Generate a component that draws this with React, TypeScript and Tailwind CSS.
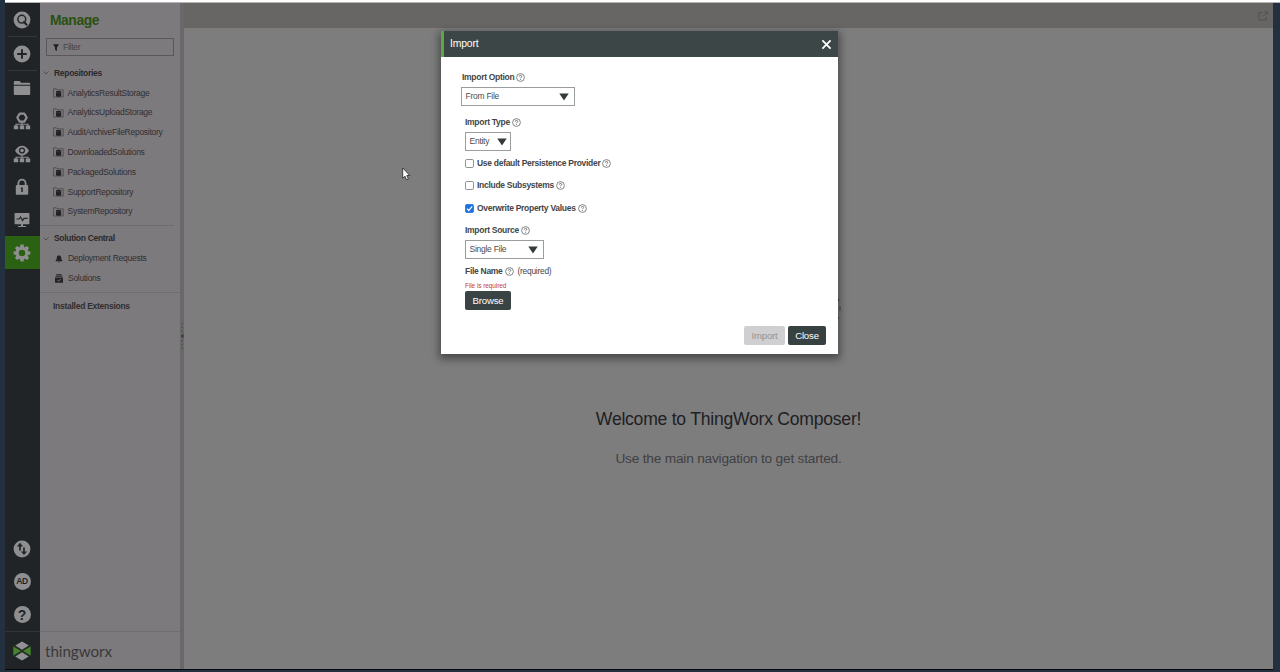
import React from "react";

const light = "#8f8f91";
const dark = "#202527";

function Search() {
  return (
    <svg width="18" height="18" viewBox="0 0 18 18">
      <circle cx="9" cy="9" r="8.4" fill={light} />
      <circle cx="8.8" cy="8.2" r="3.9" fill="none" stroke={dark} strokeWidth="1.5" />
      <path d="M11 11l2.6 2.8" stroke={dark} strokeWidth="2" strokeLinecap="round" />
    </svg>
  );
}
function Plus() {
  return (
    <svg width="18" height="18" viewBox="0 0 18 18">
      <circle cx="9" cy="9" r="8.4" fill={light} />
      <path d="M9 4.2v9.6M4.2 9h9.6" stroke={dark} strokeWidth="1.9" />
    </svg>
  );
}
function Folder() {
  return (
    <svg width="18" height="18" viewBox="0 0 18 18">
      <path d="M.8 4.8V3q0-1 1-1h4.4q.9 0 1.2.8l.5 1h8.3q1 0 1 1v.9H.8zM.8 6.8h16.4v8.3q0 1-1 1H1.8q-1 0-1-1z" fill={light} />
    </svg>
  );
}
function Things({ eye }: { eye?: boolean }) {
  return (
    <svg width="18" height="18" viewBox="0 0 18 18">
      {eye ? (
        <>
          <path d="M2 5.7Q5 .8 9 .8t7 4.9Q13 10.4 9 10.4T2 5.7z" fill={light} />
          <circle cx="9" cy="5.5" r="3.1" fill={dark} />
          <circle cx="9" cy="5.5" r="1.8" fill={light} />
        </>
      ) : (
        <path d="M6.7 1.6h4.6l2.4 4-2.4 4H6.7l-2.4-4z" fill="none" stroke={light} strokeWidth="2.1" strokeLinejoin="round" />
      )}
      <path d="M9 10v4M3 14v-1.8h12V14" fill="none" stroke={light} strokeWidth="1.1" />
      <path d="M.8 13.5h4.4v3.7H.8zM6.8 13.5h4.4v3.7H6.8zM12.8 13.5h4.4v3.7h-4.4z" fill={light} />
    </svg>
  );
}
function Lock() {
  return (
    <svg width="18" height="18" viewBox="0 0 18 18">
      <path d="M5.4 8V5.2a3.6 3.6 0 017.2 0V8" fill="none" stroke={light} strokeWidth="1.8" />
      <rect x="2.8" y="7" width="12.4" height="9.8" rx="1" fill={light} />
      <path d="M8 9.6h1.8v4.4H8.3v-3H7.6z" fill={dark} />
    </svg>
  );
}
function Monitor() {
  return (
    <svg width="18" height="18" viewBox="0 0 18 18">
      <rect x="1.6" y="2" width="14.8" height="11.2" rx=".6" fill={light} />
      <path d="M3.4 8h2.8l1.4-2 2 3.6 1.3-2.2h3.7" fill="none" stroke={dark} strokeWidth="1.1" />
      <path d="M8 13h2v2h3v1.1H5V15h3z" fill={light} />
    </svg>
  );
}
const teeth = [0, 45, 90, 135, 180, 225, 270, 315];
function Gear() {
  return (
    <svg width="18" height="18" viewBox="0 0 18 18">
      {teeth.map((a) => (
        <path key={a} d="M6.9 3.6L7.5.6h3l.6 3z" fill={light} transform={`rotate(${a} 9 9)`} />
      ))}
      <circle cx="9" cy="9" r="4.8" fill="none" stroke={light} strokeWidth="3" />
    </svg>
  );
}
function Transfer() {
  return (
    <svg width="18" height="18" viewBox="0 0 18 18">
      <circle cx="9" cy="9" r="8.4" fill={light} />
      <path d="M7 10.4V5.2M11 7.6v5" stroke={dark} strokeWidth="1.7" />
      <path d="M3.9 6.4L7 2.8l3.1 3.6zM7.9 11.5L11 15.1l3.1-3.6z" fill={dark} />
    </svg>
  );
}
function Badge({ children, big }: { children: string; big?: boolean }) {
  return (
    <div
      className={`flex h-[17px] w-[17px] items-center justify-center rounded-full bg-[#8f8f91] leading-none font-bold text-[#202527] ${big ? "text-[14px]" : "text-[8.5px] tracking-[-0.4px]"}`}
    >
      {children}
    </div>
  );
}
function Logo() {
  return (
    <svg width="20" height="20" viewBox="0 0 20 20">
      <path d="M10 .6l6.8 3.9L10 8.8 3.2 4.5zM10 11.2l6.8 4.3L10 19.4l-6.8-3.9z" fill="#929294" />
      <path d="M1.3 5.2L9.1 10l-7.8 4.8zM18.7 5.2L10.9 10l7.8 4.8z" fill="#47832e" />
      <path d="M1.3 5.2L18.7 14.8M18.7 5.2L1.3 14.8" stroke="#28401f" strokeWidth=".7" />
    </svg>
  );
}
function Help() {
  return (
    <svg width="9" height="9" viewBox="0 0 9 9" className="shrink-0">
      <circle cx="4.5" cy="4.5" r="3.9" fill="none" stroke="#5d6060" strokeWidth=".75" />
      <path d="M3.3 3.6q0-1.2 1.2-1.2t1.2 1.1c0 .8-1.2.8-1.2 1.8M4.5 6v.8" fill="none" stroke="#4b4e4e" strokeWidth=".75" />
    </svg>
  );
}
function RepoIcon() {
  return (
    <svg width="11" height="10" viewBox="0 0 11 10" className="shrink-0">
      <path d="M.6 9V.8h2.8l.8 1h6v7.2z" fill="#7d7a7d" stroke="#3f3d40" strokeWidth=".65" />
      <path d="M3 3.2q2.6-1.1 5.2 0v5q-2.6 1.1-5.2 0z" fill="#222023" />
      <path d="M3 4.4q2.6.8 5.2 0" stroke="#5b585a" strokeWidth=".35" fill="none" />
    </svg>
  );
}
function Chevron() {
  return (
    <svg width="6" height="4" viewBox="0 0 6 4" className="shrink-0">
      <path d="M.5.5L3 3 5.5.5" fill="none" stroke="#454345" strokeWidth=".8" />
    </svg>
  );
}
function SectionTitle({ children }: { children: string }) {
  return (
    <div className="flex h-5 items-center gap-[5px] pl-[3px] text-[8.5px] tracking-[-0.3px] font-bold text-[#2a282b]">
      <Chevron />
      {children}
    </div>
  );
}
function Select({ children, className }: { children: string; className: string }) {
  return (
    <div className={`flex h-[19px] items-center justify-between border border-[#9b9d9d] pl-[3.5px] text-[8.5px] tracking-[-0.26px] text-[#4a4d4d] ${className}`}>
      {children}
      <svg width="10" height="8" viewBox="0 0 10 8">
        <path d="M.3.6h9.4L5 7.6z" fill="#333b3b" />
      </svg>
    </div>
  );
}
function Label({ children, className = "" }: { children: string; className?: string }) {
  return (
    <div className={`flex h-[10px] items-center gap-[2px] text-[8.5px] tracking-[-0.29px] leading-none font-bold whitespace-nowrap text-[#434647] ${className}`}>
      <span>{children}</span>
      <Help />
    </div>
  );
}
function Check({ label, checked, className }: { label: string; checked?: boolean; className: string }) {
  return (
    <div className={`flex items-center gap-[3px] ${className}`}>
      <svg width="9" height="9" viewBox="0 0 9 9">
        <rect x=".5" y=".5" width="8" height="8" rx="1.3" fill={checked ? "#1a73e0" : "#fff"} stroke={checked ? "#1a73e0" : "#777"} strokeWidth=".8" />
        {checked && <path d="M2 4.7l1.8 1.8L7.2 2.4" fill="none" stroke="#fff" strokeWidth="1.2" />}
      </svg>
      <Label>{label}</Label>
    </div>
  );
}

const repositories = [
  "AnalyticsResultStorage",
  "AnalyticsUploadStorage",
  "AuditArchiveFileRepository",
  "DownloadedSolutions",
  "PackagedSolutions",
  "SupportRepository",
  "SystemRepository",
];

function RailItem({ children, active }: { children: React.ReactNode; active?: boolean }) {
  return <div className={`flex h-[33px] shrink-0 items-center justify-center pr-px ${active ? "bg-[#2b6112]" : ""}`}>{children}</div>;
}

function Rail() {
  return (
    <nav className="flex w-[35px] shrink-0 flex-col bg-[#202427]">
      <div className="mx-[3px] flex h-[34px] items-center justify-center border-b border-[#34383a] pr-px"><Search /></div>
      <div className="mx-[3px] flex h-[34px] items-center justify-center border-b border-[#34383a] pr-px"><Plus /></div>
      <RailItem><Folder /></RailItem>
      <RailItem><Things /></RailItem>
      <RailItem><Things eye /></RailItem>
      <RailItem><Lock /></RailItem>
      <RailItem><Monitor /></RailItem>
      <RailItem active><Gear /></RailItem>
      <div className="mt-auto" />
      <RailItem><Transfer /></RailItem>
      <RailItem><Badge>AD</Badge></RailItem>
      <RailItem><Badge big>?</Badge></RailItem>
      <div className="flex h-[38px] items-center justify-center border-t border-[#303436] pr-[2px]"><Logo /></div>
    </nav>
  );
}

function Sidebar() {
  return (
    <aside className="flex w-[140px] shrink-0 flex-col bg-[#7d7a7d] text-[8.5px] tracking-[-0.27px] text-[#302e31]">
      <h1 className="mt-[10px] ml-[10px] text-[13.8px] leading-4 font-bold tracking-[-0.4px] text-[#29510f]">Manage</h1>
      <div className="mt-[9px] ml-[6px] flex h-[18px] w-[128px] items-center gap-[4px] border border-[#59575a] pl-[6px] text-[#444245]">
        <svg width="6" height="7" viewBox="0 0 6 7"><path d="M0 .2h6L3.9 3.4V7L2.1 6V3.4z" fill="#222023" /></svg>
        Filter
      </div>
      <div className="mt-[7px]"><SectionTitle>Repositories</SectionTitle></div>
      <ul>
        {repositories.map((r) => (
          <li key={r} className="flex h-[19.8px] items-center gap-[3.5px] pl-[13px]">
            <RepoIcon />{r}
          </li>
        ))}
      </ul>
      <div className="mt-[3px] mr-[6px] border-t border-[#706d70] pt-[3px]">
        <SectionTitle>Solution Central</SectionTitle>
      </div>
      <div className="flex h-5 items-center gap-[5px] pl-[15px]">
        <svg width="8" height="8" viewBox="0 0 8 8"><path d="M4 .2q2.3.3 2.3 2.8 0 2 1.4 3.2H.3Q1.7 5 1.7 3 1.7.5 4 .2zM3 6.8h2q-1 1.4-2 0z" fill="#252326" /></svg>
        Deployment Requests
      </div>
      <div className="flex h-5 items-center gap-[5px] pl-[15px]">
        <svg width="8" height="9" viewBox="0 0 8 9"><path d="M1.2.3h5.6v1H1.2zM.6 1.8h6.8v1H.6zM0 3.4h8v5.3H0z" fill="#252326" /><path d="M2.5 6l1.2 1.2 2-2.3" fill="none" stroke="#858285" strokeWidth=".8" /></svg>
        Solutions
      </div>
      <div className="mt-[3px] border-t border-[#706d70] pt-[7px] pl-[13px] leading-[12px] font-bold">Installed Extensions</div>
      <div className="mt-auto flex h-[38px] items-center border-t border-[#706d70] pt-px pl-[5px] font-[Lato] text-[15.2px] tracking-[-0.05px] text-[#3a383a]">thingworx</div>
    </aside>
  );
}

function ImportDialog() {
  return (
    <section className="absolute top-[31px] left-[441px] flex h-[323px] w-[396.5px] flex-col bg-white shadow-[0_3px_8px_2px_rgba(0,0,0,0.42)]">
      <header className="flex h-[26px] shrink-0 items-center justify-between border-l-[3px] border-[#5fa744] bg-[#3c4646] pr-[6px] pl-[6px] text-[10.4px] tracking-[-0.15px] text-white">
        <span className="mb-px">Import</span>
        <svg width="11" height="11" viewBox="0 0 11 11"><path d="M1.4 1.4l8.2 8.2M9.6 1.4L1.4 9.6" stroke="#fff" strokeWidth="1.8" /></svg>
      </header>
      <div className="pl-[20px]">
        <Label className="mt-[15px] ml-[1px]">Import Option</Label>
        <Select className="mt-[5px] w-[114px] pr-[5px]">From File</Select>
        <div className="flex flex-col items-start pl-[4px]">
          <Label className="mt-[11px]">Import Type</Label>
          <Select className="mt-[5px] w-[46px] pr-[3px]">Entity</Select>
          <Check className="mt-[7px]" label="Use default Persistence Provider" />
          <Check className="mt-[12px]" label="Include Subsystems" />
          <Check className="mt-[13px]" label="Overwrite Property Values" checked />
          <Label className="mt-[12px]">Import Source</Label>
          <Select className="mt-[5px] w-[79px] pr-[5px]">Single File</Select>
          <div className="mt-[7px] flex items-center gap-[4px] text-[8.4px] leading-none tracking-[-0.25px] text-[#434647]">
            <Label>File Name</Label>(required)
          </div>
          <div className="mt-[6px] text-[6.5px] leading-[8px] tracking-[-0.08px] text-[#c33d3d]">File is required</div>
          <button className="mt-px h-[19px] w-[46px] rounded-[2px] bg-[#3a4444] pt-px text-[9.6px] leading-none tracking-[-0.18px] text-white">Browse</button>
        </div>
      </div>
      <footer className="mt-auto mr-[11.5px] mb-[9px] flex justify-end gap-[3px] text-[9.6px] leading-none tracking-[-0.18px]">
        <button className="h-[19px] w-[41px] rounded-[2px] bg-[#cfcfd1] pt-px text-[#939496]">Import</button>
        <button className="h-[19px] w-[38px] rounded-[2px] bg-[#374141] pt-px text-white">Close</button>
      </footer>
    </section>
  );
}

export default function App() {
  return (
    <div className="relative flex h-[672px] w-[1280px] flex-col overflow-hidden bg-[#223040] font-['Liberation_Sans',sans-serif]">
      <div className="ml-[5px] h-[3px] shrink-0 border-b border-[#b4b4b4] bg-white" />
      <div className="mr-[7px] ml-[5px] flex h-[666px] shrink-0">
        <Rail />
        <Sidebar />
        <div className="flex w-1 shrink-0 flex-col items-center justify-center bg-[#6a686a]">
          <svg width="4" height="28" viewBox="0 0 4 28"><path d="M2 1v9M2 18v9" stroke="#444244" strokeWidth="1" strokeDasharray="1.5 2.2" /><path d="M3.4 11.5v5L.8 14z" fill="#373537" /></svg>
        </div>
        <main className="flex min-w-0 flex-1 flex-col bg-[#7d7d7e]">
          <div className="flex h-[25px] shrink-0 items-center justify-end bg-[#676664] pr-[5px]">
            <svg width="10" height="10" viewBox="0 0 10 10" fill="none" stroke="#525152"><path d="M4.5 1.5H1v7.5h7.3V5.8M6 .8h3.4v3.4M9.2 1L4.8 5.4" /></svg>
          </div>
          <div className="flex flex-col items-center pt-[381px]">
            <h2 className="text-[17.6px] leading-5 tracking-[-0.25px] text-[#202022]">Welcome to ThingWorx Composer!</h2>
            <p className="mt-[22px] text-[13.7px] leading-4 tracking-[-0.21px] text-[#404042]">Use the main navigation to get started.</p>
          </div>
        </main>
      </div>
      <div className="mr-[7px] ml-[5px] h-px bg-[#06080a]" />
      <svg className="absolute top-[295px] left-[832px]" width="10" height="28" viewBox="0 0 10 28">
        <path d="M5.5 3l1.5 3M8 11.5v4M6.5 22l-1 3" fill="none" stroke="#4c4c4e" strokeWidth="1.2" />
      </svg>
      <ImportDialog />
      <svg className="absolute top-[167px] left-[402px]" width="9" height="14" viewBox="0 0 9 14">
        <path d="M.7.9v10.3l2.3-2 1.6 3.6 1.8-.8-1.6-3.5h3z" fill="#fff" stroke="#222" strokeWidth=".8" />
      </svg>
    </div>
  );
}
